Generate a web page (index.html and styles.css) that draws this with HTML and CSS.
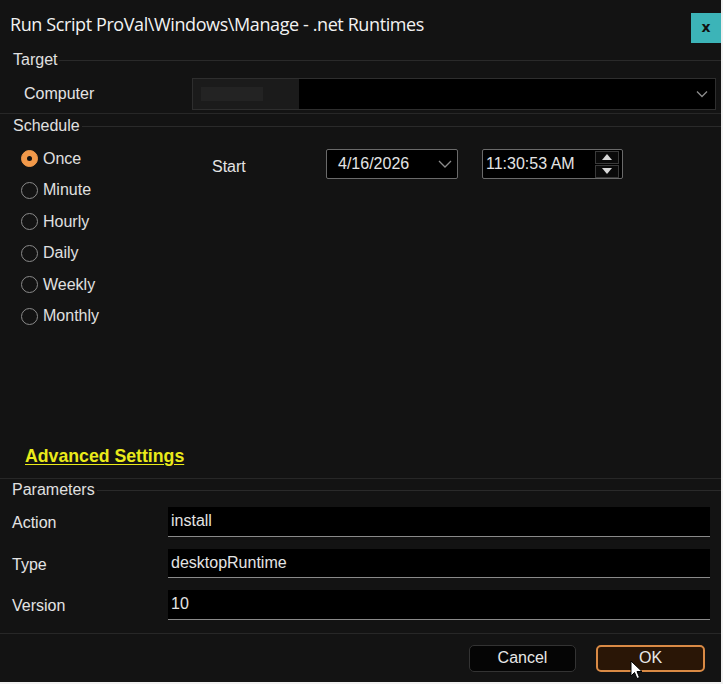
FILE: index.html
```html
<!DOCTYPE html>
<html lang="en">
<head>
    <meta charset="UTF-8">
    <title>Run Script</title>
    <link rel="stylesheet" href="styles.css">
</head>
<body>
    <div class="dialog">
        <div class="titlebar">
            <span class="title">Run Script ProVal\Windows\Manage - .net Runtimes</span>
            <button class="close-btn">x</button>
        </div>

        <!-- Target -->
        <section class="group group-target">
            <div class="group-head"><span>Target</span></div>
            <div class="field-row">
                <label class="field-label">Computer</label>
                <div class="combo">
                    <span class="masked"><span class="masked-inner"></span></span>
                    <svg class="chevron" width="12" height="8" viewBox="0 0 12 8"><polyline points="1,1.5 6,6.5 11,1.5" fill="none" stroke="#8c8c8c" stroke-width="1.3"/></svg>
                </div>
            </div>
        </section>

        <!-- Schedule -->
        <section class="group group-schedule">
            <div class="group-head"><span>Schedule</span></div>
            <div class="schedule-body">
                <ul class="radios">
                    <li class="checked"><span class="radio"></span>Once</li>
                    <li><span class="radio"></span>Minute</li>
                    <li><span class="radio"></span>Hourly</li>
                    <li><span class="radio"></span>Daily</li>
                    <li><span class="radio"></span>Weekly</li>
                    <li><span class="radio"></span>Monthly</li>
                </ul>
                <div class="start">
                    <span class="start-label">Start</span>
                    <div class="date-box">
                        <span>4/16/2026</span>
                        <svg width="14" height="8" viewBox="0 0 14 8"><polyline points="1,1 7,7 13,1" fill="none" stroke="#8c8c8c" stroke-width="1.3"/></svg>
                    </div>
                    <div class="time-box">
                        <span>11:30:53 AM</span>
                        <div class="spinner">
                            <span class="spin-btn"><svg width="10" height="6" viewBox="0 0 10 6"><polygon points="0,6 5,0 10,6" fill="#d8d8d8"/></svg></span>
                            <span class="spin-btn"><svg width="10" height="6" viewBox="0 0 10 6"><polygon points="0,0 10,0 5,6" fill="#d8d8d8"/></svg></span>
                        </div>
                    </div>
                </div>
            </div>
            <a class="advanced" href="#">Advanced Settings</a>
        </section>

        <!-- Parameters -->
        <section class="group group-params">
            <div class="group-head"><span>Parameters</span></div>
            <div class="param-row">
                <label class="param-label">Action</label>
                <div class="param-input">install</div>
            </div>
            <div class="param-row">
                <label class="param-label">Type</label>
                <div class="param-input">desktopRuntime</div>
            </div>
            <div class="param-row">
                <label class="param-label">Version</label>
                <div class="param-input">10</div>
            </div>
        </section>

        <div class="footer">
            <button class="btn">Cancel</button>
            <button class="btn btn-ok">OK</button>
            <svg class="cursor" width="13" height="20" viewBox="0 0 13 20"><polygon points="1,1 1,16 4.5,12.5 7,18.5 9.5,17.5 7,11.5 12,11.5" fill="#fff" stroke="#000" stroke-width="1"/></svg>
        </div>
    </div>
</body>
</html>
```

FILE: styles.css
```css
/* Base */
body {
    margin: 0;
    background: #f2f2f2;
    font-family: 'Liberation Sans', Arial, sans-serif;
}

.dialog {
    position: relative;
    width: 721px;
    height: 682px;
    background: #131313;
    color: #e4e4e4;
    font-size: 16px;
    overflow: hidden;
}

/* Title bar */
.titlebar {
    height: 50px;
    display: flex;
    align-items: flex-start;
    justify-content: space-between;
}

.title {
    margin: 12px 0 0 10px;
    font-family: 'Open Sans', sans-serif;
    font-size: 18px;
    letter-spacing: -0.4px;
    color: #f2f2f2;
}

.close-btn {
    margin-top: 13px;
    width: 30px;
    height: 30px;
    border: none;
    background: #3cb4b8;
    color: #111;
    font: bold 14px 'DejaVu Sans', sans-serif;
    padding: 0 0 2px;
}

/* Group boxes */
.group {
    border-bottom: 1px solid #272727;
}

.group-head {
    display: flex;
    align-items: center;
    height: 20px;
    color: #e0e0e0;
}

.group-head::after {
    content: '';
    flex: 1;
    height: 1px;
    margin-left: 2px;
    background: #2a2a2a;
}

.group-target .group-head {
    padding-left: 13px;
}

.group-target {
    padding-bottom: 3px;
}

.field-row {
    display: flex;
    align-items: center;
    margin-top: 8px;
}

.field-label {
    width: 168px;
    padding-left: 24px;
}

.combo {
    flex: 1;
    height: 30px;
    margin-right: 5px;
    background: #000;
    border: 1px solid #2e2e2e;
    display: flex;
    align-items: center;
    justify-content: space-between;
}

.masked {
    width: 106px;
    height: 30px;
    background: #1b1b1b;
    display: flex;
    align-items: center;
}

.masked-inner {
    width: 62px;
    height: 14px;
    margin-left: 8px;
    background: #232323;
}

.chevron {
    margin-right: 7px;
}

/* Schedule */
.group-schedule {
    margin-top: 2px;
    padding-bottom: 7px;
}

.group-schedule .group-head {
    padding-left: 13px;
}

.schedule-body {
    display: flex;
    height: 298px;
    margin-top: 7px;
}

.radios {
    list-style: none;
    margin: 0;
    padding: 0 0 0 21px;
    width: 191px;
}

.radios li {
    display: flex;
    align-items: center;
    height: 31.5px;
    color: #e0e0e0;
}

.radio {
    width: 15px;
    height: 15px;
    border: 1.5px solid #8a8a8a;
    border-radius: 50%;
    margin-right: 5px;
    box-sizing: content-box;
}

.radios li.checked .radio {
    background: #f2994a;
    border-color: #f2994a;
    position: relative;
}

.radios li.checked .radio::after {
    content: '';
    position: absolute;
    left: 5px;
    top: 5px;
    width: 5px;
    height: 5px;
    border-radius: 50%;
    background: #111;
}

.start {
    display: flex;
    align-items: flex-start;
    padding-top: 6px;
}

.start-label {
    width: 114px;
    padding-top: 9px;
}

.date-box,
.time-box {
    height: 28px;
    border: 1px solid #6a6a6a;
    border-radius: 2px;
    background: #000;
    display: flex;
    align-items: center;
    justify-content: space-between;
    box-sizing: content-box;
}

.date-box {
    width: 130px;
}

.date-box span {
    margin-left: 11px;
}

.date-box svg {
    margin-right: 5px;
}

.time-box {
    width: 139px;
    margin-left: 24px;
}

.time-box span {
    margin-left: 3px;
}

.spinner {
    display: flex;
    flex-direction: column;
    gap: 1px;
    margin-right: 3px;
}

.spin-btn {
    width: 22px;
    height: 11px;
    border: 1px solid #3a3a3a;
    display: flex;
    align-items: center;
    justify-content: center;
    background: #0a0a0a;
}

.advanced {
    display: block;
    margin-left: 25px;
    line-height: 30px;
    color: #eaea1a;
    font-weight: bold;
    font-size: 17.7px;
    text-decoration: underline;
    text-underline-offset: 2px;
}

/* Parameters */
.group-params {
    margin-top: 1px;
    padding-bottom: 13px;
}

.group-params .group-head {
    padding-left: 12px;
}

.param-row {
    display: flex;
    align-items: center;
    margin-top: 12px;
}

.group-head + .param-row {
    margin-top: 7px;
}

.param-label {
    width: 156px;
    padding-left: 12px;
    padding-top: 3px;
}

.param-input {
    flex: 1;
    height: 28.5px;
    margin-right: 11px;
    padding: 0 3px;
    background: #000;
    border-bottom: 1.5px solid #8a8a8a;
    line-height: 27px;
}

/* Footer buttons */
.footer {
    position: relative;
    display: flex;
    justify-content: flex-end;
    gap: 20px;
    padding: 11px 16px 0 0;
}

.btn {
    width: 107px;
    height: 27px;
    border-radius: 5px;
    border: 1px solid #333;
    background: #050505;
    color: #e8e8e8;
    font-family: 'Liberation Sans', Arial, sans-serif;
    font-size: 16px;
}

.btn-ok {
    width: 109px;
    border: 2px solid #d98a45;
    background: #2a1606;
}

.cursor {
    position: absolute;
    left: 630px;
    top: 26px;
}
```
